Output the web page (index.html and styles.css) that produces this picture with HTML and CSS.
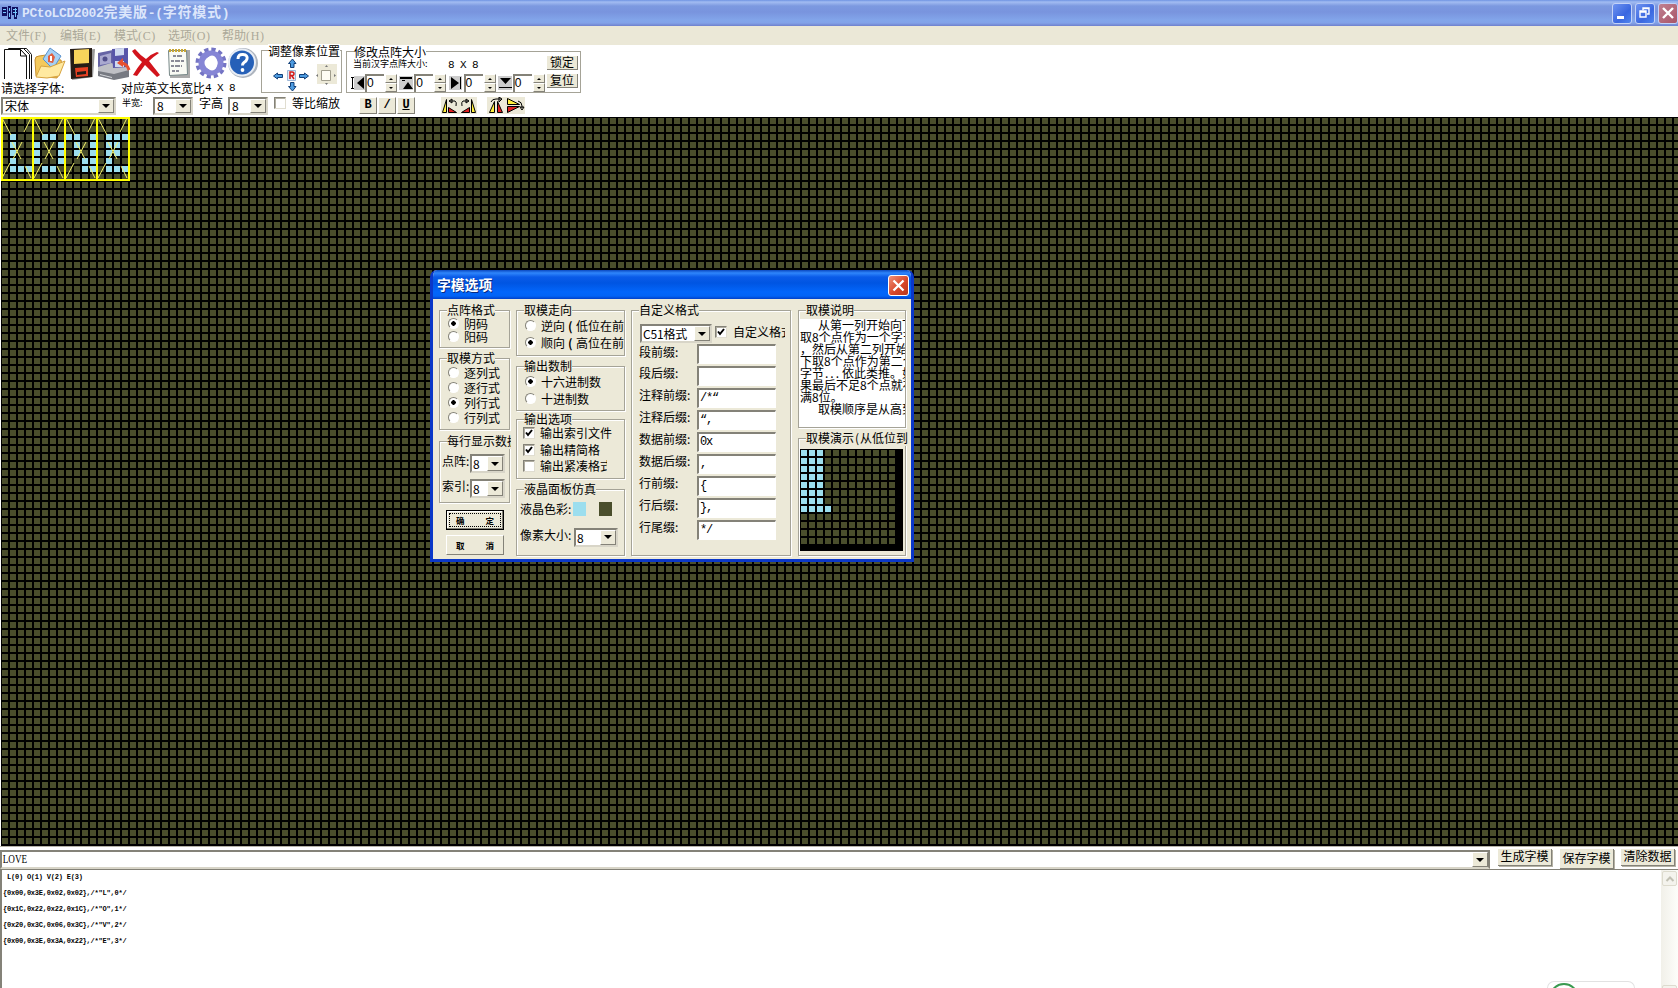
FILE: index.html
```html
<!DOCTYPE html>
<html lang="zh-CN">
<head>
<meta charset="utf-8">
<title>PCtoLCD2002完美版</title>
<link rel="stylesheet" href="styles.css">
</head>
<body>
<div class="app">
  <header class="titlebar">
    <svg class="app-icon" width="17" height="14" viewBox="0 0 17 14"><path fill="#101060" d="M0 1h5v9H0zM6 0h3v13H6zM10 1h6v8h-6zM12 9h3v4h-3z"/><path stroke="#78c8ff" fill="none" d="M1 3.500h3M1 6.500h3M7.500 2v3M7.500 7v4M11 3.500h4M11 6.500h4M13.500 2v9"/></svg>
    <h1 class="app-title"><span class="title-latin">PCtoLCD2002</span>完美版<span class="title-latin">-(</span>字符模式<span class="title-latin">)</span></h1>
    <div class="win-buttons">
      <span class="win-btn"><svg width="20" height="20" viewBox="0 0 20 20"><path fill="#fff" d="M5 13h7v3H5z"/></svg></span>
      <span class="win-btn"><svg width="20" height="20" viewBox="0 0 20 20"><path fill="none" stroke="#fff" stroke-width="1.4" d="M5 8h6v6H5zM5 9h6M8 7V5h6v6h-2M8 5.600h6"/></svg></span>
      <span class="win-btn win-btn-close"><svg width="20" height="20" viewBox="0 0 20 20"><path stroke="#fff" stroke-width="2.400" d="M5 5l10 10M15 5L5 15"/></svg></span>
    </div>
  </header>
  <nav class="menubar">
    <span>文件<i>(F)</i></span><span>编辑<i>(E)</i></span><span>模式<i>(C)</i></span><span>选项<i>(O)</i></span><span>帮助<i>(H)</i></span>
  </nav>
  <section class="toolbar">
    <div class="tool-upper">
      <div class="tool-left">
        <div class="icon-row">
          <svg width="33" height="34" viewBox="0 46 33 34"><g fill="#fff" stroke="#111"><path d="M12.500 79V48.500h14l5 6V79"/><path d="M8.500 79V48.500h15l6 6V79"/><path d="M4.500 79V49.500h16l6 6.500V79"/><path d="M20.500 49.500V56h6z"/></g></svg>
          <svg width="34" height="34" viewBox="33 46 34 34"><path fill="#f4c95c" stroke="#c89030" d="M35 60q0-4 4-4l7-1 3 4 12 1 1 6-5 12-21-2z"/><path fill="#a5d0f5" stroke="#5b92cc" d="M50 48l11 8-8 13-10-10z"/><path fill="#e06040" d="M48 56l4-3 3 4-2 6-5-1z"/><path fill="#fff" d="M50 56h2v5h-2z"/><path fill="#ffe9a0" stroke="#d7a340" d="M36 77l5-11 9 1 15-6-6 15-12 2z"/></svg>
          <svg width="29" height="34" viewBox="67 46 29 34"><path fill="#999" d="M72 51l23-2-2 28-21 3z"/><path fill="#251c16" d="M70 49l22-1v29l-21 2z"/><path fill="#f8d45b" d="M74 50l15-1v14l-15 1z"/><path fill="#e64023" d="M75 68l13-1v9l-12 1z"/><path fill="#251c16" d="M77 72l9-1v3l-9 1z"/></svg>
          <svg width="35" height="34" viewBox="96 46 35 34"><path fill="#6664a5" d="M98 53l15-3v20l-15 2z"/><path fill="#aaa9d0" d="M100 56l11-3v10l-11 2z"/><circle cx="105" cy="59" r="2.500" fill="#514e8b"/><path fill="#bfc0c5" d="M98 67l13-4 18 5v8l-16 3-15-3z"/><path fill="#777a82" d="M98 71l16 3 15-4v7l-15 3-16-4z"/><path fill="#d5d6da" d="M100 74l12 3v1l-12-3z"/><path fill="#5855a9" d="M112 49l16-1v19l-15 1z"/><path fill="#d0daf0" d="M115 49l9-1v7l-9 1zM115 61h9v6h-9z"/><path fill="none" stroke="#e8512f" stroke-width="3" d="M129 70q-2-7-9-7"/><path fill="#e8512f" d="M117 63l6-5v9z"/></svg>
          <svg width="32" height="34" viewBox="130 46 32 34"><path fill="#d2141c" d="M131 51l3-2q5 6 11 10 5-5 11-7l2 1q-6 4-10 8l11 14-3 2-12-12-8 11-4-1q4-7 9-13-7-6-10-11z"/></svg>
          <svg width="30" height="34" viewBox="162 46 30 34"><path fill="#aaa" d="M169 50h20v28h-20z"/><path fill="#f9faf4" stroke="#788" d="M167.500 50.500h18l1 24-18 1z"/><path stroke="#c8a634" stroke-width="3" stroke-dasharray="2 1" d="M168 50.500h17"/><path stroke="#667" stroke-width="1.300" stroke-dasharray="3 1 5 1" d="M172 56h9M170 61h13M170 66h11M171 71h7"/></svg>
          <svg width="34" height="34" viewBox="192 46 34 34"><circle cx="210" cy="63" r="13.500" fill="none" stroke="#7474c4" stroke-width="4" stroke-dasharray="4.200 2.860"/><circle cx="210" cy="63" r="9.500" fill="none" stroke="#8585d5" stroke-width="6"/><ellipse cx="211" cy="63" rx="5.500" ry="7.500" fill="#fff"/></svg>
          <svg width="31" height="34" viewBox="226 46 31 34"><circle cx="242" cy="63" r="15" fill="#adb4be"/><circle cx="241" cy="62.500" r="14" fill="#e8edf5"/><circle cx="241" cy="62.500" r="12" fill="#2660b8"/><path d="M237 59q0-5 5-4.500 5 .5 4 4.500-.5 2-3 3.500-1.500 1-1.500 3" fill="none" stroke="#fff" stroke-width="3"/><circle cx="241.500" cy="70" r="1.900" fill="#fff"/></svg>
        </div>
        <div class="label-row"><span class="pick-label">请选择字体:</span><span class="ratio-label">对应英文长宽比</span><span class="mono">4 X 8</span></div>
      </div>
      <div class="group move-group">
        <div class="legend">调整像素位置</div>
        <svg class="move-pad" width="76" height="34" viewBox="265 58 76 34"><g fill="#4d9be0" stroke="#123f78" stroke-width="1"><path d="M290.500 67.500v-4h-2l4-4.500 3.500 4.500h-2v4z"/><path d="M290.500 82.500v4h-2l4 4.500 3.500-4.500h-2v-4z"/><path d="M282.500 77.500h-5v1.500l-4-3 4-3v1.500h5z"/><path d="M299.500 77.500h5v1.500l4-3-4-3v1.500h-5z"/></g><path fill="#e4ecf6" stroke="#9bb6d8" d="M287.500 70.500h8v10h-8z"/><path fill="none" stroke="#d31919" stroke-width="1.500" d="M290 79v-7h2q2 0 2 1.800T292 75.500h-2M291.500 75.500l2.500 3.500"/><path fill="#ece9d8" d="M317 64h20v20h-20z"/><path fill="#fffdf4" stroke="#a19e8e" d="M321.500 70.500h9v10h-9z"/><path fill="#777" d="M325 67h3l-1.500-2zM325 83h3l-1.500 2zM334 74v3l2-1.500zM318 74v3l-2-1.500z"/></svg>
      </div>
      <div class="group size-group">
        <div class="size-left">
          <div class="legend">修改点阵大小</div>
          <div class="size-info"><span class="tiny">当前汉字点阵大小:</span><span class="mono">8 X 8</span></div>
          <div class="spin-row">
            <div class="spin"><svg width="15" height="14" viewBox="0 0 15 14"><path fill="#ccc" d="M4 0h11v14H4z"/><path d="M1 1h3v1H3v10h1v1H1v-1h1V2H1zM14 1v12L7 7z"/></svg><b>0</b><em><u class="up"></u><u class="down"></u></em></div>
            <div class="spin"><svg width="15" height="14" viewBox="0 0 15 14"><path fill="#ccc" d="M0 0h14v14H0z"/><path d="M1 1h12v2H1zM9 6l5 7H4zM3 4h3v1H3z"/></svg><b>0</b><em><u class="up"></u><u class="down"></u></em></div>
            <div class="spin"><svg width="15" height="14" viewBox="0 0 15 14"><path fill="#ccc" d="M0 0h13v14H0z"/><path d="M2 1v12l8-6zM11 1h1v12h-1z"/></svg><b>0</b><em><u class="up"></u><u class="down"></u></em></div>
            <div class="spin"><svg width="15" height="14" viewBox="0 0 15 14"><path fill="#ccc" d="M0 0h14v14H0z"/><path d="M2 2h11L7.500 8zM1 11h13v1H1z"/></svg><b>0</b><em><u class="up"></u><u class="down"></u></em></div>
          </div>
        </div>
        <div class="size-buttons"><span class="mini-btn">锁定</span><span class="mini-btn">复位</span></div>
      </div>
    </div>
    <div class="tool-lower">
      <span class="combo font-combo"><b>宋体</b><i></i></span>
      <span class="tiny half-label">半宽:</span>
      <span class="combo size-combo"><b>8</b><i></i></span>
      <span class="high-label">字高</span>
      <span class="combo size-combo"><b>8</b><i></i></span>
      <span class="check ratio-check"></span>
      <span class="ratio-text">等比缩放</span>
      <div class="style-btns"><span class="sq-btn">B</span><span class="sq-btn slant">/</span><span class="sq-btn under">U</span></div>
      <div class="turn-btns">
        <svg width="18" height="17" viewBox="0 0 18 17"><path fill="#ece9d8" d="M0 0h18v17H0z"/><path fill="#ffef3c" stroke="#000" d="M1.500 15.500l4-13v13z"/><path fill="#e02020" stroke="#000" d="M7.500 15.500v-5l8 5z"/><path fill="none" stroke="#000" d="M9 4h5q2 1 1 5M11 2L8 4l3 2z"/></svg>
        <svg width="18" height="17" viewBox="0 0 18 17"><path fill="#ece9d8" d="M0 0h18v17H0z"/><path fill="#ffef3c" stroke="#000" d="M16.500 15.500l-4-13v13z"/><path fill="#e02020" stroke="#000" d="M10.500 15.500v-5l-8 5z"/><path fill="none" stroke="#000" d="M9 4H4Q2 5 3 9M7 2l3 2-3 2z"/></svg>
      </div>
      <div class="turn-btns">
        <svg width="19" height="17" viewBox="0 0 19 17"><path fill="#ece9d8" d="M0 0h19v17H0z"/><path fill="#ffef3c" stroke="#000" d="M2.500 15.500l5-11v11z"/><path fill="#e02020" stroke="#000" d="M15.500 15.500l-5-11v11z"/><path fill="none" stroke="#000" d="M4 5q1-3 5-3h5M12 0l3 2-3 3z"/></svg>
        <svg width="19" height="17" viewBox="0 0 19 17"><path fill="#ece9d8" d="M0 0h19v17H0z"/><path fill="#ffef3c" stroke="#000" d="M1.500 1.500v6h12z"/><path fill="#e02020" stroke="#000" d="M1.500 15.500v-6h12z"/><path fill="none" stroke="#000" d="M12 4q4 1 4 5v2M14 10l2 3 2-3z"/></svg>
      </div>
    </div>
  </section>
  <main class="lcd">
    <svg width="132" height="66" viewBox="1 117 132 66">
      <path fill="#9cdeee" d="M10 134h6v6h-6zM10 142h6v6h-6zM10 150h6v6h-6zM10 158h6v6h-6zM10 166h6v6h-6zM18 166h6v6h-6zM26 166h6v6h-6z
        M42 134h6v6h-6zM50 134h6v6h-6zM34 142h6v6h-6zM58 142h6v6h-6zM34 150h6v6h-6zM58 150h6v6h-6zM34 158h6v6h-6zM58 158h6v6h-6zM42 166h6v6h-6zM50 166h6v6h-6z
        M66 134h6v6h-6zM90 134h6v6h-6zM74 134h6v6h-6zM74 142h6v6h-6zM90 142h6v6h-6zM74 150h6v6h-6zM90 150h6v6h-6zM82 158h6v6h-6zM90 158h6v6h-6zM82 166h6v6h-6zM90 166h6v6h-6z
        M106 134h6v6h-6zM114 134h6v6h-6zM122 134h6v6h-6zM106 142h6v6h-6zM114 142h6v6h-6zM106 150h6v6h-6zM114 150h6v6h-6zM106 158h6v6h-6zM106 166h6v6h-6zM114 166h6v6h-6zM122 166h6v6h-6z"/>
      <path fill="none" stroke="#f3f06a" d="M2 118l9 17M12 142l9 17M22 142l-9 17M31 118l-7 14M2 178l8-15M31 178l-6-12
        M34 118l9 17M44 142l9 17M54 142l-9 17M63 118l-7 14M34 178l8-15M63 178l-6-12
        M66 118l9 17M76 142l9 17M86 142l-9 17M95 118l-7 14M66 178l8-15M95 178l-6-12
        M98 118l9 17M108 142l9 17M118 142l-9 17M127 118l-7 14M98 178l8-15M127 178l-6-12"/>
      <path fill="none" stroke="#ff0" stroke-width="2" d="M2 118h127v62H2zM33 118v62M65 118v62M97 118v62"/>
    </svg>
  </main>
  <section class="input-row">
    <span class="combo text-combo"><b>LOVE</b><i></i></span>
    <span class="out-btn">生成字模</span><span class="out-btn tall">保存字模</span><span class="out-btn last">清除数据</span>
  </section>
  <section class="output">
    <pre class="output-text"> L(0) O(1) V(2) E(3)
{0x00,0x3E,0x02,0x02},/*"L",0*/
{0x1C,0x22,0x22,0x1C},/*"O",1*/
{0x20,0x3C,0x06,0x3C},/*"V",2*/
{0x00,0x3E,0x3A,0x22},/*"E",3*/</pre>
    <div class="bubble"><i></i></div>
    <div class="scrollbar"><span class="scroll-btn"><svg width="14" height="14" viewBox="0 0 14 14"><path fill="none" stroke="#c2c1b4" stroke-width="2" d="M3.500 9L7 5.500 10.500 9"/></svg></span><span class="scroll-btn"></span></div>
  </section>
</div>

<div class="dialog">
  <div class="dialog-title"><h2>字模选项</h2><span class="dialog-close"><svg width="19" height="19" viewBox="0 0 19 19"><path stroke="#fff" stroke-width="2.300" d="M4.500 4.500l10 10M14.500 4.500l-10 10"/></svg></span></div>
  <div class="dialog-body">
    <div class="col col-a">
      <div class="group g-format"><div class="legend">点阵格式</div>
        <label class="opt"><s class="radio on"></s>阴码</label><label class="opt"><s class="radio"></s>阳码</label></div>
      <div class="group g-mode"><div class="legend">取模方式</div>
        <label class="opt"><s class="radio"></s>逐列式</label><label class="opt"><s class="radio"></s>逐行式</label><label class="opt"><s class="radio on"></s>列行式</label><label class="opt"><s class="radio"></s>行列式</label></div>
      <div class="group g-perline"><div class="legend wide">每行显示数据</div>
        <div class="line"><span>点阵:</span><span class="combo"><b>8</b><i></i></span></div>
        <div class="line"><span>索引:</span><span class="combo"><b>8</b><i></i></span></div></div>
      <button class="dlg-btn default"><span>确</span><span>定</span></button>
      <button class="dlg-btn"><span>取</span><span>消</span></button>
    </div>
    <div class="col col-b">
      <div class="group g-dir"><div class="legend">取模走向</div>
        <label class="opt"><s class="radio"></s>逆向<b>(</b>低位在前</label><label class="opt"><s class="radio on"></s>顺向<b>(</b>高位在前</label></div>
      <div class="group g-base"><div class="legend">输出数制</div>
        <label class="opt"><s class="radio on"></s>十六进制数</label><label class="opt"><s class="radio"></s>十进制数</label></div>
      <div class="group g-out"><div class="legend">输出选项</div>
        <label class="opt"><s class="check on"></s>输出索引文件</label><label class="opt"><s class="check on"></s>输出精简格</label><label class="opt"><s class="check"></s><span class="clip">输出紧凑格式</span></label></div>
      <div class="group g-lcd"><div class="legend">液晶面板仿真</div>
        <div class="line"><span>液晶色彩:</span><span class="swatch lit"></span><span class="swatch dark"></span></div>
        <div class="line"><span>像素大小:</span><span class="combo"><b>8</b><i></i></span></div></div>
    </div>
    <div class="col col-c">
      <div class="group g-custom"><div class="legend">自定义格式</div>
        <div class="custom-head"><span class="combo"><b>C51格式</b><i></i></span><s class="check on"></s><span class="clip">自定义格式</span></div>
        <div class="field"><span>段前缀:</span><b></b></div>
        <div class="field"><span>段后缀:</span><b></b></div>
        <div class="field"><span>注释前缀:</span><b>/*“</b></div>
        <div class="field"><span>注释后缀:</span><b>“,</b></div>
        <div class="field"><span>数据前缀:</span><b>0x</b></div>
        <div class="field"><span>数据后缀:</span><b>,</b></div>
        <div class="field"><span>行前缀:</span><b>{</b></div>
        <div class="field"><span>行后缀:</span><b>},</b></div>
        <div class="field"><span>行尾缀:</span><b>*/</b></div>
      </div>
    </div>
    <div class="col col-d">
      <div class="group g-help"><div class="legend">取模说明</div>
        <div class="help-text"><p class="indent">从第一列开始向下</p><p>取<i>8</i>个点作为一个字节</p><p>，然后从第二列开始向</p><p>下取<i>8</i>个点作为第二个</p><p>字节<i class="dots">...</i>依此类推。如</p><p>果最后不足<i>8</i>个点就补</p><p>满<i>8</i>位。</p><p class="indent">取模顺序是从高到</p></div></div>
      <div class="group g-demo"><div class="legend wide">取模演示<i>(</i>从低位到</div>
        <div class="demo"><svg width="96" height="96" viewBox="0 0 96 96"><defs><pattern id="cell" width="8" height="8" patternUnits="userSpaceOnUse"><path fill="#4a4e2c" d="M0 0h6v6H0z"/></pattern><pattern id="lit" width="8" height="8" patternUnits="userSpaceOnUse"><path fill="#9cdeee" d="M0 0h6v6H0z"/></pattern></defs><path fill="url(#cell)" d="M0 0h96v96H0z"/><path fill="url(#lit)" d="M0 0h24v56h8v8H0z"/></svg></div></div>
    </div>
  </div>
</div>
</body>
</html>
```
FILE: styles.css
```css
* { box-sizing: border-box; }
body { margin: 0; background: #fff; color: #000; font: 12px/14px "Noto Sans CJK SC", sans-serif; overflow: hidden; }
i, em { font-style: normal; }
b { font-weight: 400; }
u, s { text-decoration: none; display: block; }
h1, h2, p, pre { margin: 0; }
svg { display: block; flex: none; }
span, label { white-space: nowrap; }
.app { width: 1678px; height: 988px; display: flex; flex-direction: column; overflow: hidden; }
.mono { font-family: "Liberation Mono", monospace; font-size: 11px; letter-spacing: -.6px; }
.tiny { font-size: 9px; letter-spacing: 0; }

.titlebar { height: 26px; flex: none; display: flex; align-items: center; padding-left: 2px; background: linear-gradient(#6f93e2 0, #a2bcf2 2px, #7c99e0 6px, #7994de 12px, #82a5ea 20px, #82a2e8 23px, #6f80cc 26px); }
.app-title { flex: 1; margin-left: 3px; font-size: 14px; line-height: 23px; padding-bottom: 2px; font-weight: 700; color: #dce6fb; letter-spacing: .8px; white-space: nowrap; }
.title-latin { font-family: "Liberation Mono", monospace; font-size: 13px; letter-spacing: -.4px; }
.win-buttons { display: flex; gap: 3px; }
.win-btn { width: 20px; height: 21px; border: 1px solid #c3d2f8; border-radius: 3px; background: linear-gradient(135deg, #6f93f0, #3a67e0 60%, #4f85ee); }
.win-btn svg { margin: -1px; }
.win-btn-close { background: linear-gradient(135deg, #c08090, #a85468); }
.menubar { height: 19px; flex: none; display: flex; gap: 12px; padding-left: 6px; background: #ebe8d7; color: #aca899; line-height: 17px; }
.menubar i { font-family: "Liberation Serif", serif; letter-spacing: .6px; display: inline-block; width: 18px; white-space: nowrap; }

.toolbar { height: 72px; flex: none; display: flex; flex-direction: column; }
.tool-upper { height: 51px; display: flex; }
.tool-left { width: 261px; padding-top: 1px; }
.icon-row { display: flex; height: 34px; }
.label-row { display: flex; line-height: 16px; height: 15px; }
.pick-label { width: 121px; padding-left: 1px; }
.ratio-label { width: 84px; }
.group { border: 1px solid #a5a397; box-shadow: 1px 1px 0 #fff, inset 1px 1px 0 #fff; display: flex; flex-direction: column; }
.legend { align-self: flex-start; margin: -7px 0 0 7px; height: 14px; line-height: 14px; background: #fff; white-space: nowrap; flex: none; }
.move-group { width: 81px; height: 43px; margin: 5px 4px 0 0; }
.move-group .legend { margin-left: 6px; }
.move-pad { margin: 0 0 0 3px; }
.size-group { width: 235px; height: 42px; margin-top: 6px; flex-direction: row; }
.size-left { width: 200px; display: flex; flex-direction: column; }
.size-info { display: flex; height: 14px; margin-top: -2px; padding-left: 6px; align-items: center; }
.size-info .tiny { width: 95px; }
.size-info .mono { padding-top: 2px; }
.spin-row { display: flex; margin-top: 3px; padding-left: 3px; }
.spin { display: flex; width: 49.500px; align-items: center; }
.spin b { width: 19px; height: 18px; line-height: 14px; border: solid; border-width: 2px 0 0 2px; border-color: #848278; font-family: "Liberation Sans", sans-serif; }
.spin em { width: 12px; margin-left: 1px; }
.up, .down { height: 9px; background: #ece9d8; border: 1px solid; border-color: #fff #848278 #848278 #fff; display: flex; justify-content: center; align-items: center; }
.up::before, .down::before { content: ""; border: 2px solid transparent; border-top-width: 0; border-bottom-color: #000; }
.down::before { border-width: 2px 2px 0; border-top-color: #000; }
.size-buttons { padding-top: 4px; display: flex; flex-direction: column; gap: 4px; }
.mini-btn { width: 31px; height: 14px; line-height: 12px; text-align: center; background: #ece9d8; border: solid; border-width: 0 1px 1px 0; border-color: #848278; }

.tool-lower { display: flex; align-items: flex-start; padding: 1px 0 0 1px; height: 21px; }
.combo { display: flex; flex: none; background: #fff; border: 2px solid; border-color: #848278 #d8d5c8 #d8d5c8 #848278; height: 18px; }
.combo b { flex: 1; padding-left: 2px; line-height: 14px; }
.combo i { width: 16px; background: #ece9d8; border: 1px solid; border-color: #fff #848278 #848278 #fff; display: flex; align-items: center; justify-content: center; }
.combo i::before { content: ""; border: 4px solid transparent; border-width: 4px 4px 0; border-top-color: #000; }
.font-combo { width: 115px; }
.half-label { width: 37px; padding-left: 6px; line-height: 11px; }
.size-combo { width: 40px; }
.high-label { width: 35px; padding-left: 6px; line-height: 12px; }
.check { width: 12px; height: 12px; flex: none; background: #fff; border: 1px solid; border-color: #848278 #e0ddd0 #e0ddd0 #848278; box-shadow: inset 1px 1px 0 #b0ada0; }
.check.on { background: #fff url("data:image/svg+xml,%3Csvg xmlns='http://www.w3.org/2000/svg' viewBox='0 0 10 10'%3E%3Cpath d='M2 4.500l2 2.500 4-5' fill='none' stroke='%23000' stroke-width='2'/%3E%3C/svg%3E") center/10px; }
.ratio-check { margin-left: 6px; }
.ratio-text { margin-left: 6px; width: 67px; line-height: 12px; }
.style-btns, .turn-btns { display: flex; }
.style-btns { gap: 1px; margin-right: 26px; }
.turn-btns { margin-right: 10px; }
.sq-btn { width: 18px; height: 17px; background: #ece9d8; border: 1px solid; border-color: #fff #848278 #848278 #fff; font: bold 12px/15px "Liberation Mono", monospace; text-align: center; }
.under { text-decoration: underline; }

.lcd { height: 729px; flex: none; margin-left: 1px; background: linear-gradient(90deg, #000 2px, transparent 2px) -1px -1px / 8px 8px, linear-gradient(#000 2px, transparent 2px) -1px -1px / 8px 8px, #4a4e2c; }

.input-row { height: 23px; flex: none; display: flex; align-items: flex-start; padding: 3px 0 0; border-top: 1px solid #b8b5a8; }
.text-combo { width: 1490px; height: 19px; margin-right: 8px; border-right-color: #848278; justify-content: space-between; }
.text-combo b { flex: none; font-family: "Liberation Serif", serif; font-size: 12px; padding-left: 1px; line-height: 15px; transform: scaleX(.76); transform-origin: left; }
.out-btn { width: 54px; height: 17px; line-height: 14px; text-align: center; background: #ece9d8; border: solid; border-width: 0 1px 1px 0; border-color: #848278; box-shadow: 1px 1px 0 #b5b2a5; margin-right: 8px; margin-top: -1px; }
.out-btn.tall { height: 20px; line-height: 18px; margin-right: 7px; }
.out-btn.last { margin-right: 0; }
.output { flex: 1; display: flex; border: solid #848278; border-width: 1px 0 0 2px; overflow: hidden; }
.output-text { flex: 1; padding: 0 0 0 1px; font: bold 7px/16px "Liberation Mono", monospace; letter-spacing: -.220px; margin-top: -1px; }
.bubble { align-self: flex-end; width: 88px; height: 7px; margin-right: 26px; border: 1px solid #e2e2e2; border-bottom: 0; border-radius: 14px 14px 0 0; padding-left: 1px; overflow: hidden; }
.bubble i { display: block; width: 30px; height: 30px; margin-top: 1px; border: 2px solid #3a9a50; border-radius: 50%; }
.scrollbar { width: 17px; background: linear-gradient(90deg, #f1f0e9, #fdfdfa); display: flex; flex-direction: column; justify-content: space-between; align-items: center; padding-top: 1px; }
.scroll-btn { width: 15px; height: 15px; flex: none; border: 1px solid #dddbce; border-radius: 2px; background: #f4f3ed; }
.scroll-btn + .scroll-btn { margin-bottom: -12px; }

.dialog { position: absolute; left: 430px; top: 270px; width: 484px; height: 292px; background: #ece9d8; border: solid #0a37c8; border-width: 0 3px 3px; border-radius: 7px 7px 0 0; display: flex; flex-direction: column; overflow: hidden; }
.dialog-title { height: 29px; flex: none; margin: 0 -3px; padding: 0 5px 0 7px; display: flex; justify-content: space-between; align-items: center; background: linear-gradient(#0a48c0 0, #2f86fb 3px, #0a5be8 7px, #0055e2 13px, #0266fb 22px, #0264f6 26px, #0140c8 29px); }
.dialog-title h2 { font-size: 13.800px; line-height: 20px; margin-top: -2px; color: #fff; font-weight: 700; text-shadow: 1px 1px 0 #0a2a80; }
.dialog-close { width: 21px; height: 21px; border: 1px solid #fff; border-radius: 3px; margin-top: 2px; background: linear-gradient(135deg, #f09078, #d8482a 55%, #b8371c); }
.dialog-body { flex: 1; display: flex; padding: 11px 0 0 6px; gap: 6px; }
.dialog .legend { background: #ece9d8; margin-top: -8px; height: 15px; }
.dialog .combo { height: 19px; }
.dialog .combo b { padding-left: 1px; line-height: 15px; font-size: 12px; }
.col { display: flex; flex-direction: column; }
.col-a { width: 71px; }
.col-b { width: 109px; }
.col-c { width: 160px; }
.col-d { width: 108px; margin-left: 1px; }
.opt { display: flex; align-items: center; flex: none; }
.radio { width: 11px; height: 11px; flex: none; border: 1px solid; border-color: #848278 #fff #fff #848278; border-radius: 50%; background: #fff; }
.radio.on { background: radial-gradient(circle, #000 2px, #fff 2.500px); }
.col-a .radio, .col-b .radio { margin: 0 5px 0 8px; }
.opt b { font-weight: 700; width: 12px; padding-left: 3px; }
.g-format { height: 38px; margin-bottom: 10px; padding-top: 0; }
.g-format .opt { height: 13px; margin-top: -1px; margin-bottom: 1px; }
.g-mode { height: 72px; margin-bottom: 11px; }
.g-mode .opt { height: 15px; margin-top: -1px; margin-bottom: 1px; }
.g-perline { height: 62px; margin-bottom: 7px; }
.legend.wide { width: 64px; overflow: hidden; }
.g-perline .line { display: flex; align-items: center; height: 19px; margin: 5px 0 1px 2px; }
.g-perline .line span:first-child { width: 28px; line-height: 14px; margin-top: -6px; }
.g-perline .combo { width: 35px; }
.dlg-btn { width: 58px; height: 20px; margin: 0 0 5px 7px; padding: 0 9px; border: 1px solid; border-color: #fff #848278 #848278 #fff; background: #ece9d8; display: flex; justify-content: space-between; align-items: center; font: bold 8.500px/12px "Noto Sans CJK SC", sans-serif; color: #000; flex: none; }
.dlg-btn.default { border: 1px solid #000; box-shadow: inset -1px -1px 0 #848278, inset 1px 1px 0 #fff; outline: 1px dotted #000; outline-offset: -4px; }
.g-dir { height: 46px; margin-bottom: 10px; }
.g-dir .opt { height: 17px; margin-top: -1px; margin-bottom: 1px; overflow: hidden; }
.g-base { height: 45px; margin-bottom: 8px; }
.g-base .opt { height: 17px; margin-top: -1px; margin-bottom: 1px; }
.g-out { height: 60px; margin-bottom: 10px; }
.g-out .opt { height: 16.500px; }
.g-out .check { margin: 0 5px 0 6px; }
.g-out .opt:nth-child(2) { margin-top: -2px; }
.g-lcd { height: 67px; }
.clip { overflow: hidden; width: 67px; }
.g-lcd .line { display: flex; align-items: center; height: 20px; padding-left: 3px; margin-top: 2px; }
.g-lcd .line span:first-child { width: 54px; }
.g-lcd .swatch { margin-right: 12px; }
.g-lcd .lit { margin-left: 2px; }
.g-lcd .dark { margin-left: 1px; }
.g-lcd .line + .line { margin-top: 8px; }
.g-lcd .line + .line span:first-child { margin-top: -4px; }
.g-lcd .combo { width: 44px; }
.swatch { width: 14px; height: 14px; }
.lit { background: #9cdeee; }
.dark { background: #4a4e2c; }
.g-custom { height: 246px; }
.custom-head { display: flex; align-items: center; margin: 6px 0 0 8px; height: 19px; }
.custom-head .combo { width: 72px; }
.custom-head .combo b { letter-spacing: -.2px; }
.custom-head .check { margin: -3px 6px 0 3px; }
.custom-head .clip { width: 52px; margin-top: -3px; }
.field { display: flex; padding-left: 7px; height: 22px; align-items: flex-start; }
.field span { width: 58px; line-height: 14px; }
.field b { width: 79px; height: 20px; background: #fff; border: solid; border-width: 2px 1px 1px 2px; border-color: #848278 #fff #fff #848278; padding-left: 1px; font: 12px/16px "Liberation Mono", monospace; letter-spacing: -1.200px; }
.custom-head + .field { margin-top: 1px; }
.custom-head + .field span { padding-top: 1px; }
.g-help { height: 118px; margin-bottom: 10px; }
.help-text { flex: 1; margin: 1px 0 0 1px; background: #fff; overflow: hidden; line-height: 12px; white-space: nowrap; }
.help-text i, .legend i { display: inline-block; min-width: 6px; text-align: center; }
.help-text .dots { width: 18px; letter-spacing: 2px; }
.indent { padding-left: 18px; }
.g-demo { height: 118px; }
.g-demo .legend.wide { width: 102px; }
.demo { width: 103px; height: 102px; margin: 3px 0 0 1px; padding: 1px; background: #000; }
```
